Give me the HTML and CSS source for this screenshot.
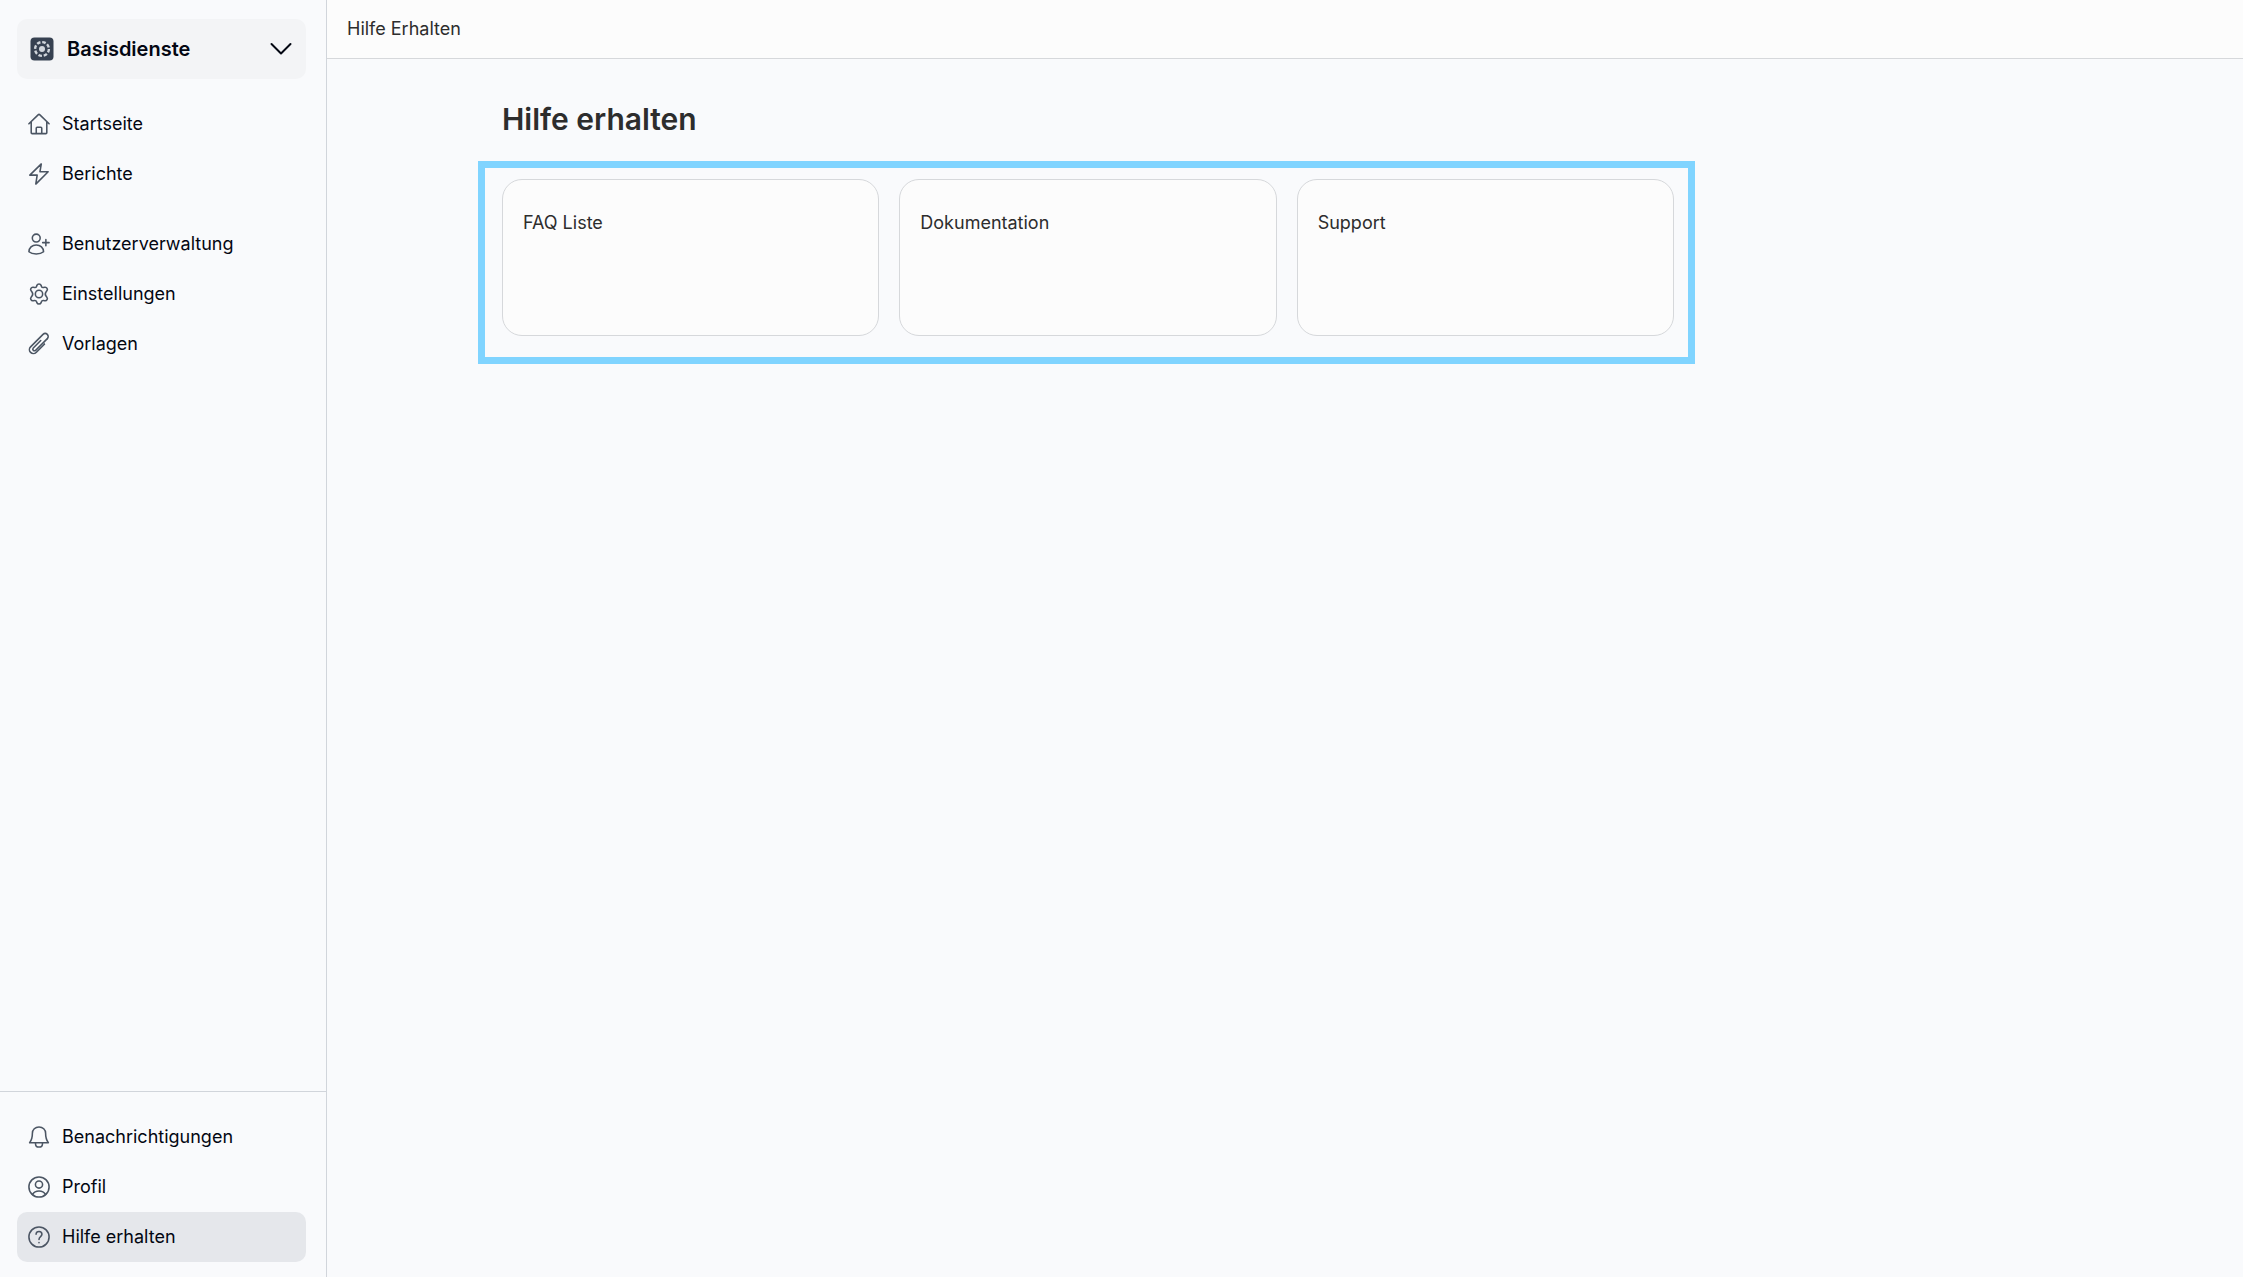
FILE: index.html
```html
<!DOCTYPE html>
<html lang="de">
<head>
	<meta charset="UTF-8">
	<meta name="viewport" content="width=device-width, initial-scale=1">
	<title>Hilfe erhalten</title>
	<link rel="stylesheet" href="styles.css">
</head>
<body>
	<aside class="sidebar">
		<div class="sidebar-top">
			<button class="switcher" type="button">
				<svg class="logo" viewBox="0 0 24 24">
					<rect x="0.5" y="0.5" width="23" height="23" rx="4" fill="#374151"/>
					<circle cx="12" cy="12" r="3" fill="#d1d5db"/>
					<circle cx="12" cy="12" r="6.9" fill="none" stroke="#d1d5db" stroke-width="2.4" stroke-dasharray="3.6 1.82"/>
				</svg>
				<span>Basisdienste</span>
				<svg class="chevron" viewBox="0 0 22 22">
					<path d="M1.5 6 L11 15.5 L20.5 6"/>
				</svg>
			</button>
			<nav class="nav">
				<a class="nav-item" href="#">
					<svg viewBox="0 0 24 24"><path d="M1 11.8 L11 2 q1-0.9 2 0 L23 11.8 M3.5 9.8 V21.5 q0 1 1 1 H19.5 q1 0 1-1 V9.8 M9 22.5 V16.5 q0-1 1-1 H14 q1 0 1 1 V22.5"/></svg>
					Startseite
				</a>
				<a class="nav-item" href="#">
					<svg viewBox="0 0 24 24"><path d="M14.5 1 L2 13.2 H10 L8.5 23 L22 9.6 H13 Z"/></svg>
					Berichte
				</a>
			</nav>
			<nav class="nav">
				<a class="nav-item" href="#">
					<svg viewBox="0 0 24 24"><circle cx="9" cy="5.5" r="4.3"/><path d="M1 20.5 C1 16 4.5 13 9 13 S17 16 17 20.5 C15 22.3 12.5 23 9 23 S3 22.3 1 20.5 Z M19.5 7 V14 M16 10.5 H23"/></svg>
					Benutzerverwaltung
				</a>
				<a class="nav-item" href="#">
					<svg viewBox="0 0 24 24"><circle cx="12" cy="12" r="4"/><path d="M9.7 2.6 C10.5 0.5 13.5 0.5 14.3 2.6 L14.7 3.7 C15 4.6 15.9 5 16.8 4.9 L18.3 4.6 C20.5 4.2 22 6.8 20.6 8.5 L19.8 9.5 C18.4 11.3 18.4 12.7 19.8 14.5 L20.6 15.5 C22 17.2 20.5 19.8 18.3 19.4 L16.8 19.1 C15.9 19 15 19.4 14.7 20.3 L14.3 21.4 C13.5 23.5 10.5 23.5 9.7 21.4 L9.3 20.3 C9 19.4 8.1 19 7.2 19.1 L5.7 19.4 C3.5 19.8 2 17.2 3.4 15.5 L4.2 14.5 C5.6 12.7 5.6 11.3 4.2 9.5 L3.4 8.5 C2 6.8 3.5 4.2 5.7 4.6 L7.2 4.9 C8.1 5 9 4.6 9.3 3.7 Z"/></svg>
					Einstellungen
				</a>
				<a class="nav-item" href="#">
					<svg viewBox="0 0 24 24"><path transform="rotate(45 12 12)" d="M16.3 8 V20.7 A4.3 4.3 0 0 1 7.7 20.7 V1.5 A3.3 3.3 0 0 1 14.3 1.5"/><path transform="rotate(45 12 12)" d="M14.3 1.5 V3 M16.3 8 V8 M14.3 3 V19.5 A1.8 1.8 0 0 1 10.7 19.5 V8"/></svg>
					Vorlagen
				</a>
			</nav>
		</div>
		<nav class="sidebar-bottom">
			<a class="nav-item" href="#">
				<svg viewBox="0 0 24 24"><path d="M12 1 C7.8 1 4.8 4 4.8 8 C4.8 13.5 4 15.5 1.8 18.3 H22.2 C20 15.5 19.2 13.5 19.2 8 C19.2 4 16.2 1 12 1 Z M8.2 18.5 V19.3 C8.2 21.5 9.8 23 12 23 S15.8 21.5 15.8 19.3 V18.5"/></svg>
				Benachrichtigungen
			</a>
			<a class="nav-item" href="#">
				<svg viewBox="0 0 24 24"><circle cx="12" cy="12" r="11"/><circle cx="12" cy="9.3" r="3.9"/><path d="M4.8 20.2 C6.4 17.5 9 16.3 12 16.3 S17.6 17.5 19.2 20.2"/></svg>
				Profil
			</a>
			<a class="nav-item active" href="#" aria-current="page">
				<svg viewBox="0 0 24 24"><circle cx="12" cy="12" r="11"/><path d="M8.8 9 C8.8 7.1 10.2 5.9 12 5.9 S15.2 7.2 15.2 9 C15.2 11.6 12 11.6 12 14.6 M12 17.9 V18.2"/></svg>
				Hilfe erhalten
			</a>
		</nav>
	</aside>
	<div class="main">
		<header class="topbar">Hilfe Erhalten</header>
		<main class="content">
			<h1>Hilfe erhalten</h1>
			<section class="highlight">
				<a class="card" href="#">FAQ Liste</a>
				<a class="card" href="#">Dokumentation</a>
				<a class="card" href="#">Support</a>
			</section>
		</main>
	</div>
</body>
</html>
```
FILE: styles.css
```css
* {
	box-sizing: border-box;
}

body {
	margin: 0;
	min-height: 100vh;
	display: flex;
	background: #f9fafc;
	color: #2d2d2d;
	font-family: Inter, "Liberation Sans", sans-serif;
	font-size: 18px;
	line-height: 28px;
}

a {
	color: inherit;
	text-decoration: none;
}

/* sidebar */

.sidebar {
	display: flex;
	flex-direction: column;
	justify-content: space-between;
	flex: none;
	width: 327px;
	border-right: 1px solid #d1d5db;
	color: #030712;
}

.sidebar-top {
	display: flex;
	flex-direction: column;
	gap: 20px;
	padding: 19px 20px 20px 17px;
}

.sidebar-bottom {
	padding: 20px 20px 15px 17px;
	border-top: 1px solid #d1d5db;
}

.switcher {
	display: flex;
	align-items: center;
	width: 100%;
	height: 60px;
	padding: 0 14px 0 13px;
	border: 0;
	border-radius: 10px;
	background: #f3f4f6;
	color: inherit;
	font: inherit;
	font-size: 20px;
	font-weight: 600;
	text-align: left;
	cursor: pointer;
}

.switcher span {
	flex: 1;
}

.logo {
	width: 24px;
	height: 24px;
	margin-right: 13px;
}

.chevron {
	width: 22px;
	height: 22px;
	fill: none;
	stroke: #030712;
	stroke-width: 2;
	stroke-linecap: round;
	stroke-linejoin: round;
}

.nav-item {
	display: flex;
	align-items: center;
	gap: 12px;
	height: 50px;
	padding: 0 11px;
	border-radius: 10px;
}

.nav-item svg {
	width: 22px;
	height: 22px;
	overflow: visible;
	fill: none;
	stroke: #4b5563;
	stroke-width: 1.7;
	stroke-linecap: round;
	stroke-linejoin: round;
}

.nav-item.active {
	background: #e5e7eb;
}

/* page */

.main {
	flex: 1;
	min-width: 0;
}

.topbar {
	height: 59px;
	padding: 15px 20px;
	border-bottom: 1px solid #d6d8db;
	background: #fcfcfc;
}

.content {
	max-width: 1566px;
	margin: 0 auto;
	padding-top: 40px;
}

h1 {
	margin: 0 0 22px;
	font-size: 30px;
	font-weight: 600;
	line-height: 40px;
}

.highlight {
	display: grid;
	grid-template-columns: repeat(3, 1fr);
	gap: 20px;
	max-width: 1217px;
	margin-left: -24px;
	padding: 11px 14px 21px 17px;
	border: 7px solid #80d4ff;
}

.card {
	min-height: 157px;
	padding: 29px 20px;
	border: 1px solid #d6d8db;
	border-radius: 20px;
	background: #fcfcfc;
}
```
